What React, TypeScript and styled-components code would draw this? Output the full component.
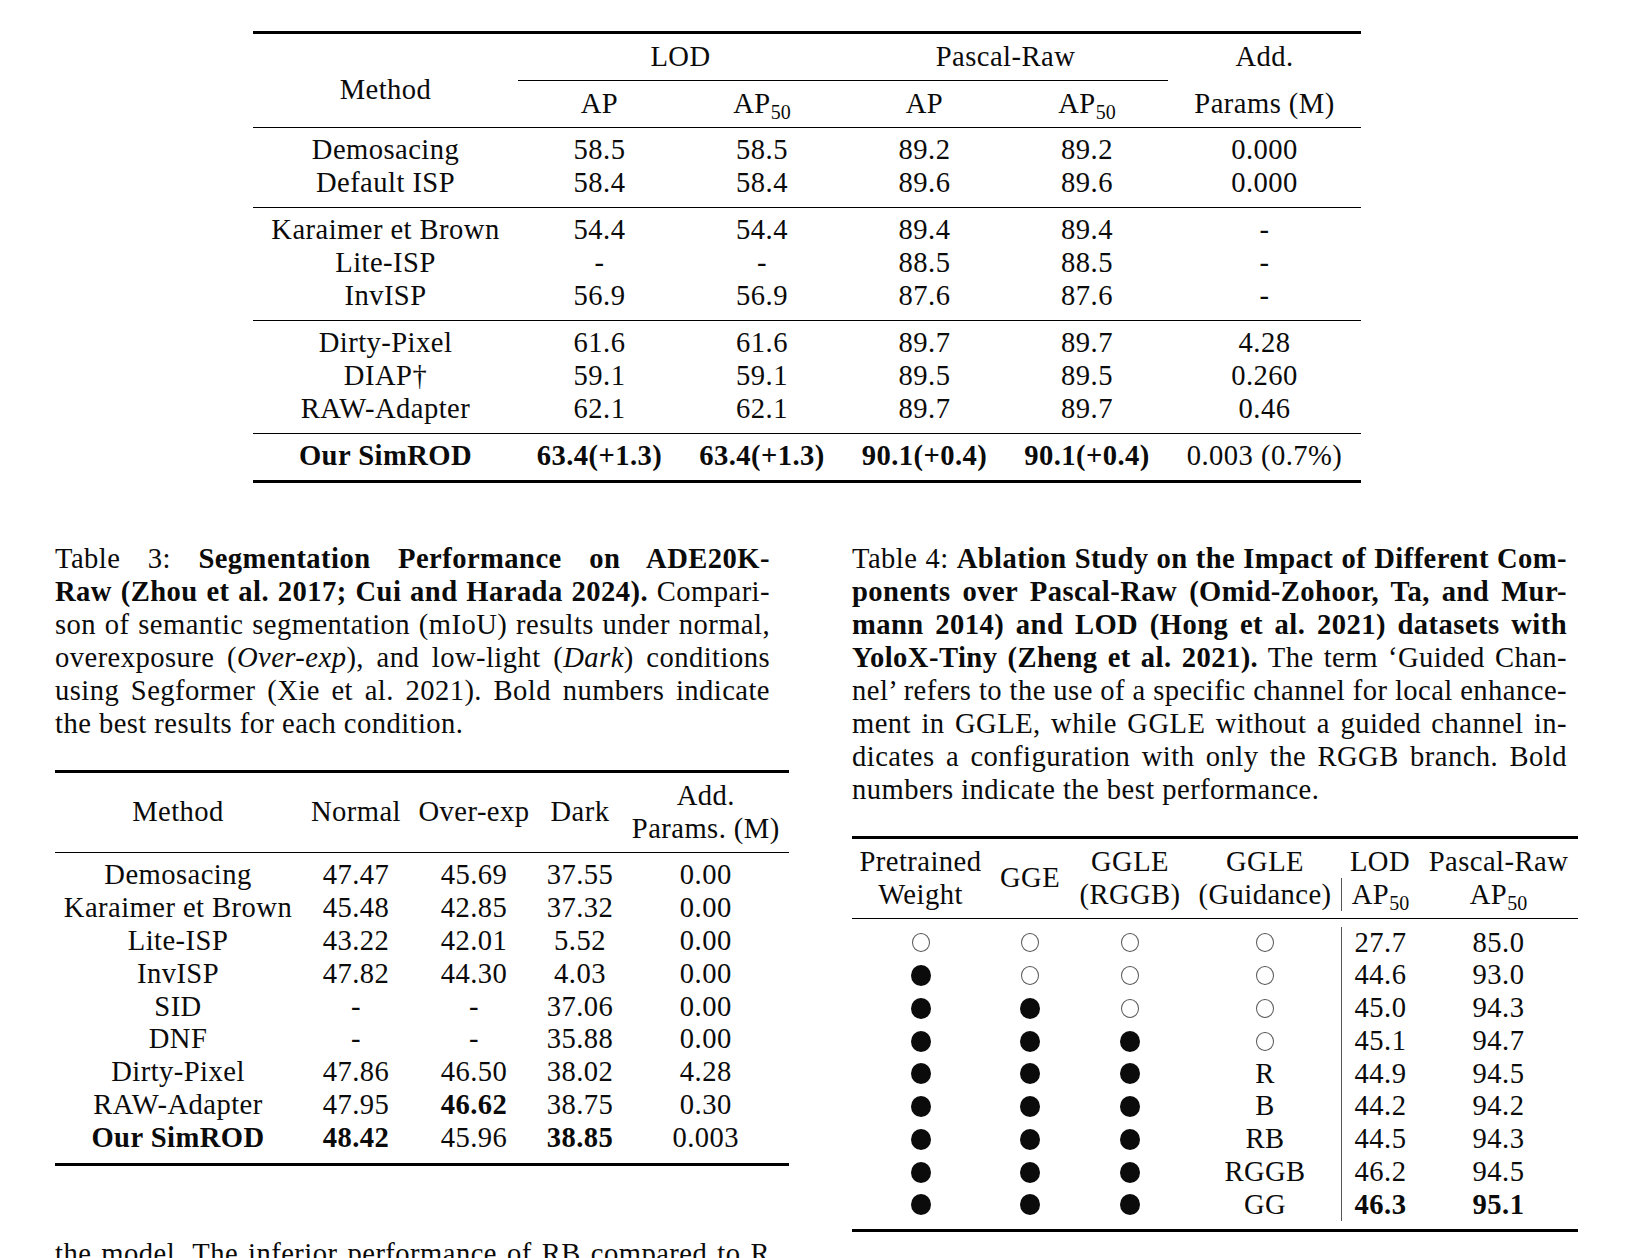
import React from "react";
import styled, { createGlobalStyle } from "styled-components";

const GlobalStyle = createGlobalStyle`
  html, body { margin: 0; padding: 0; background: #fff; overflow: hidden; }
  body {
    font-family: "Liberation Serif", "Times New Roman", Times, serif;
    font-size: 28.6px;
    letter-spacing: 0.45px;
    color: #0b0b0b;
  }
`;

const Page = styled.div`
  width: 1631px;
  box-sizing: border-box;
  padding: 30.5px 0 0 55px;
`;

/* ---------- shared text bits ---------- */
const B = styled.b`
  font-weight: 700;
`;
const I = styled.i`
  font-style: italic;
`;
const Sub = styled.sub`
  font-size: 20px;
  line-height: 0;
  vertical-align: -6px;
  letter-spacing: 0;
`;
const Val = styled.span<{ $bold?: boolean }>`
  font-weight: ${(p) => (p.$bold ? 700 : 400)};
  white-space: nowrap;
`;
const Dot = styled.span<{ $filled?: boolean }>`
  display: inline-block;
  box-sizing: border-box;
  width: ${(p) => (p.$filled ? 20 : 18)}px;
  height: ${(p) => (p.$filled ? 21 : 19)}px;
  border-radius: 50%;
  background: ${(p) => (p.$filled ? "#0b0b0b" : "transparent")};
  border: ${(p) => (p.$filled ? "none" : "1.2px solid #555")};
`;

const renderVal = (v: string) => {
  if (v === "●") return <Dot $filled />;
  if (v === "○") return <Dot />;
  if (v.startsWith("!")) return <Val $bold>{v.slice(1)}</Val>;
  return <Val>{v}</Val>;
};

const AP50 = () => (
  <span>
    AP<Sub>50</Sub>
  </span>
);

/* ---------- top table ---------- */
const topCols = "265px 163px 162px 163px 162px 193px";

const TopTable = styled.div`
  margin-left: 198px;
  width: 1108px;
  border-top: 3px solid #000;
  border-bottom: 3px solid #000;
`;
const TopHeader = styled.div`
  display: grid;
  grid-template-columns: ${topCols};
  grid-template-rows: 46px 1px 46.5px;
  border-bottom: 1px solid #000;
`;
const HCell = styled.div<{ $col: string; $row: string; $shift?: number }>`
  grid-column: ${(p) => p.$col};
  grid-row: ${(p) => p.$row};
  display: flex;
  align-items: center;
  justify-content: center;
  padding-top: ${(p) => p.$shift ?? 0}px;
  line-height: 33px;
  white-space: nowrap;
`;
const CMidRule = styled.div`
  grid-column: 2 / 6;
  grid-row: 2;
  background: #000;
`;
const TopGroup = styled.div<{ $last?: boolean }>`
  padding: 5px 0 8px;
  border-bottom: ${(p) => (p.$last ? "none" : "1px solid #000")};
`;
const TopRow = styled.div`
  display: grid;
  grid-template-columns: ${topCols};
  height: 33px;
  line-height: 33px;
  text-align: center;
`;

const topGroups: string[][][] = [
  [
    ["Demosacing", "58.5", "58.5", "89.2", "89.2", "0.000"],
    ["Default ISP", "58.4", "58.4", "89.6", "89.6", "0.000"],
  ],
  [
    ["Karaimer et Brown", "54.4", "54.4", "89.4", "89.4", "-"],
    ["Lite-ISP", "-", "-", "88.5", "88.5", "-"],
    ["InvISP", "56.9", "56.9", "87.6", "87.6", "-"],
  ],
  [
    ["Dirty-Pixel", "61.6", "61.6", "89.7", "89.7", "4.28"],
    ["DIAP†", "59.1", "59.1", "89.5", "89.5", "0.260"],
    ["RAW-Adapter", "62.1", "62.1", "89.7", "89.7", "0.46"],
  ],
  [["!Our SimROD", "!63.4(+1.3)", "!63.4(+1.3)", "!90.1(+0.4)", "!90.1(+0.4)", "0.003 (0.7%)"]],
];

/* ---------- two columns ---------- */
const Columns = styled.div`
  display: grid;
  grid-template-columns: 715px 715px;
  column-gap: 82px;
  align-items: start;
  margin-top: 58.5px;
`;
const Column = styled.div`
  display: flex;
  flex-direction: column;
  align-items: flex-start;
`;
const Caption = styled.div`
  width: 715px;
  line-height: 33px;
`;
const CapLine = styled.div<{ $last?: boolean }>`
  white-space: nowrap;
  text-align: ${(p) => (p.$last ? "left" : "justify")};
  text-align-last: ${(p) => (p.$last ? "left" : "justify")};
  word-spacing: ${(p) => (p.$last ? "0px" : "-3px")};
`;

/* ---------- table 3 ---------- */
const t3Cols = "246px 110px 126px 86px 165.5px";
const T3 = styled.div`
  width: 733.5px;
  margin-top: 30px;
  border-top: 3px solid #000;
  border-bottom: 3px solid #000;
`;
const T3Head = styled.div`
  display: grid;
  grid-template-columns: ${t3Cols};
  align-items: center;
  padding: 6px 0 7.5px;
  border-bottom: 1px solid #000;
  text-align: center;
  line-height: 33px;
  white-space: nowrap;
`;
const T3Body = styled.div`
  padding: 6.2px 0 8px;
`;
const T3Row = styled.div`
  display: grid;
  grid-template-columns: ${t3Cols};
  height: 32.85px;
  line-height: 32.85px;
  text-align: center;
`;
const t3Rows: string[][] = [
  ["Demosacing", "47.47", "45.69", "37.55", "0.00"],
  ["Karaimer et Brown", "45.48", "42.85", "37.32", "0.00"],
  ["Lite-ISP", "43.22", "42.01", "5.52", "0.00"],
  ["InvISP", "47.82", "44.30", "4.03", "0.00"],
  ["SID", "-", "-", "37.06", "0.00"],
  ["DNF", "-", "-", "35.88", "0.00"],
  ["Dirty-Pixel", "47.86", "46.50", "38.02", "4.28"],
  ["RAW-Adapter", "47.95", "!46.62", "38.75", "0.30"],
  ["!Our SimROD", "!48.42", "45.96", "!38.85", "0.003"],
];

/* ---------- table 4 ---------- */
const t4Cols = "137px 82px 118px 152px 78px 159px";
const T4 = styled.div`
  width: 726px;
  margin-top: 30px;
  border-top: 3px solid #000;
  border-bottom: 3px solid #000;
`;
const T4Head = styled.div`
  display: grid;
  grid-template-columns: ${t4Cols};
  grid-template-rows: 33px 33px;
  padding: 6px 0 7.5px;
  border-bottom: 1px solid #000;
`;
const T4HCell = styled.div<{ $col: number; $row: string; $bar?: boolean }>`
  grid-column: ${(p) => p.$col};
  grid-row: ${(p) => p.$row};
  display: flex;
  align-items: center;
  justify-content: center;
  line-height: 33px;
  white-space: nowrap;
  border-left: ${(p) => (p.$bar ? "1.5px solid #555" : "none")};
`;
const T4Body = styled.div`
  padding: 7.5px 0;
`;
const T4Row = styled.div`
  display: grid;
  grid-template-columns: ${t4Cols};
  height: 32.75px;
`;
const T4Cell = styled.div<{ $bar?: boolean }>`
  display: flex;
  align-items: center;
  justify-content: center;
  line-height: 32.75px;
  border-left: ${(p) => (p.$bar ? "1.5px solid #555" : "none")};
`;
const t4Rows: string[][] = [
  ["○", "○", "○", "○", "27.7", "85.0"],
  ["●", "○", "○", "○", "44.6", "93.0"],
  ["●", "●", "○", "○", "45.0", "94.3"],
  ["●", "●", "●", "○", "45.1", "94.7"],
  ["●", "●", "●", "R", "44.9", "94.5"],
  ["●", "●", "●", "B", "44.2", "94.2"],
  ["●", "●", "●", "RB", "44.5", "94.3"],
  ["●", "●", "●", "RGGB", "46.2", "94.5"],
  ["●", "●", "●", "GG", "!46.3", "!95.1"],
];

const BodyText = styled.div`
  width: 715px;
  margin-top: 71px;
  line-height: 33px;
  white-space: nowrap;
  text-align: justify;
  text-align-last: justify;
`;

export default function App() {
  return (
    <>
      <GlobalStyle />
      <Page>
        <TopTable>
          <TopHeader>
            <HCell $col="1" $row="1 / 4" $shift={18.5}>
              Method
            </HCell>
            <HCell $col="2 / 4" $row="1">
              LOD
            </HCell>
            <HCell $col="4 / 6" $row="1">
              Pascal-Raw
            </HCell>
            <HCell $col="6" $row="1">
              Add.
            </HCell>
            <CMidRule />
            <HCell $col="2" $row="3">
              AP
            </HCell>
            <HCell $col="3" $row="3">
              <AP50 />
            </HCell>
            <HCell $col="4" $row="3">
              AP
            </HCell>
            <HCell $col="5" $row="3">
              <AP50 />
            </HCell>
            <HCell $col="6" $row="3">
              Params (M)
            </HCell>
          </TopHeader>
          {topGroups.map((g, gi) => (
            <TopGroup key={gi} $last={gi === topGroups.length - 1}>
              {g.map((r, ri) => (
                <TopRow key={ri}>
                  {r.map((v, ci) => (
                    <div key={ci}>{renderVal(v)}</div>
                  ))}
                </TopRow>
              ))}
            </TopGroup>
          ))}
        </TopTable>

        <Columns>
          <Column>
            <Caption>
              <CapLine>
                Table 3: <B>Segmentation Performance on ADE20K-</B>
              </CapLine>
              <CapLine>
                <B>Raw (Zhou et al. 2017; Cui and Harada 2024).</B> Compari-
              </CapLine>
              <CapLine>son of semantic segmentation (mIoU) results under normal,</CapLine>
              <CapLine>
                overexposure (<I>Over-exp</I>), and low-light (<I>Dark</I>) conditions
              </CapLine>
              <CapLine>using Segformer (Xie et al. 2021). Bold numbers indicate</CapLine>
              <CapLine $last>the best results for each condition.</CapLine>
            </Caption>
            <T3>
              <T3Head>
                <div>Method</div>
                <div>Normal</div>
                <div>Over-exp</div>
                <div>Dark</div>
                <div>
                  Add.
                  <br />
                  Params. (M)
                </div>
              </T3Head>
              <T3Body>
                {t3Rows.map((r, ri) => (
                  <T3Row key={ri}>
                    {r.map((v, ci) => (
                      <div key={ci}>{renderVal(v)}</div>
                    ))}
                  </T3Row>
                ))}
              </T3Body>
            </T3>
            <BodyText>the model. The inferior performance of RB compared to R</BodyText>
          </Column>

          <Column>
            <Caption>
              <CapLine>
                Table 4: <B>Ablation Study on the Impact of Different Com-</B>
              </CapLine>
              <CapLine>
                <B>ponents over Pascal-Raw (Omid-Zohoor, Ta, and Mur-</B>
              </CapLine>
              <CapLine>
                <B>mann 2014) and LOD (Hong et al. 2021) datasets with</B>
              </CapLine>
              <CapLine>
                <B>YoloX-Tiny (Zheng et al. 2021).</B> The term ‘Guided Chan-
              </CapLine>
              <CapLine>nel’ refers to the use of a specific channel for local enhance-</CapLine>
              <CapLine>ment in GGLE, while GGLE without a guided channel in-</CapLine>
              <CapLine>dicates a configuration with only the RGGB branch. Bold</CapLine>
              <CapLine $last>numbers indicate the best performance.</CapLine>
            </Caption>
            <T4>
              <T4Head>
                <T4HCell $col={1} $row="1">
                  Pretrained
                </T4HCell>
                <T4HCell $col={1} $row="2">
                  Weight
                </T4HCell>
                <T4HCell $col={2} $row="1 / 3">
                  GGE
                </T4HCell>
                <T4HCell $col={3} $row="1">
                  GGLE
                </T4HCell>
                <T4HCell $col={3} $row="2">
                  (RGGB)
                </T4HCell>
                <T4HCell $col={4} $row="1">
                  GGLE
                </T4HCell>
                <T4HCell $col={4} $row="2">
                  (Guidance)
                </T4HCell>
                <T4HCell $col={5} $row="1">
                  LOD
                </T4HCell>
                <T4HCell $col={5} $row="2" $bar>
                  <AP50 />
                </T4HCell>
                <T4HCell $col={6} $row="1">
                  Pascal-Raw
                </T4HCell>
                <T4HCell $col={6} $row="2">
                  <AP50 />
                </T4HCell>
              </T4Head>
              <T4Body>
                {t4Rows.map((r, ri) => (
                  <T4Row key={ri}>
                    {r.map((v, ci) => (
                      <T4Cell key={ci} $bar={ci === 4}>
                        {renderVal(v)}
                      </T4Cell>
                    ))}
                  </T4Row>
                ))}
              </T4Body>
            </T4>
          </Column>
        </Columns>
      </Page>
    </>
  );
}
